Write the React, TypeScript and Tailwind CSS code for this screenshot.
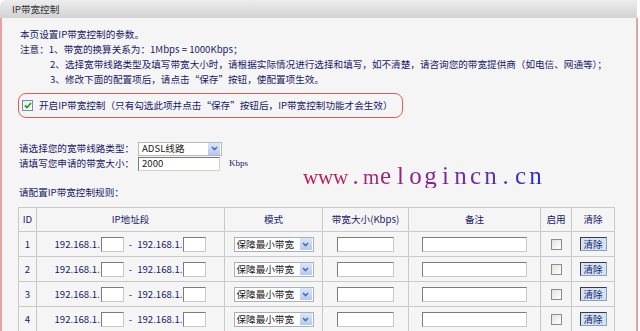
import React from 'react'

const rows = [1, 2, 3, 4]
const cols = 'grid-cols-[18px_188px_98px_86px_132px_31px_43px]'
const mark = 'www.melogincn.cn'.split('')

function Chevron() {
  return (
    <span className="ml-auto mr-[1px] flex h-[12px] w-[12px] items-center justify-center bg-gradient-to-b from-[#dbe6fb] to-[#b4c8f0]">
      <svg width="7" height="5" viewBox="0 0 7 5">
        <path d="M1 1 L3.5 3.6 L6 1" fill="none" stroke="#4d6aa8" strokeWidth="1.5" />
      </svg>
    </span>
  )
}

function TextBox({ w }: { w: string }) {
  return <span className={`block h-[15px] ${w} border border-[#7c7c7c] border-b-[#c8c8c8] border-r-[#c8c8c8] bg-white`} />
}

const cell = 'flex items-center justify-center border-b border-r border-[#c9c9c9]'

export default function App() {
  return (
    <div className="relative h-[331px] w-[640px] overflow-hidden bg-white font-['Noto_Sans_CJK_SC',sans-serif] text-[9.6px] text-[#19196a]">
      {/* title band */}
      <div className="h-[18px] w-[637px] rounded-tl-[6px] bg-gradient-to-b from-[#ededed] to-[#d2d2d2] pl-[12px] leading-[18px] text-[#333]">
        IP带宽控制
      </div>

      <div className="h-[313px] w-[638px] border-x-2 border-[#e3a3a3] bg-[#f5f5f5] pl-[16px] pt-[9px]">
        {/* notes */}
        <div className="pl-[2px] leading-[15px]">
          <div>本页设置IP带宽控制的参数。</div>
          <div>注意：1、带宽的换算关系为：1Mbps = 1000Kbps；</div>
          <div className="pl-[30px]">
            2、选择宽带线路类型及填写带宽大小时，请根据实际情况进行选择和填写，如不清楚，请咨询您的带宽提供商（如电信、网通等）；
          </div>
          <div className="pl-[30px]">3、修改下面的配置项后，请点击“保存”按钮，使配置项生效。</div>
        </div>

        {/* enable box */}
        <div className="mt-[6px] flex h-[25px] w-[385px] items-center gap-[6px] rounded-[8px] border border-[#e25a5a] pl-[3px]">
          <span className="flex h-[11px] w-[11px] items-center justify-center border border-[#6f8fae] bg-gradient-to-br from-[#e6e6e0] to-white">
            <svg width="8" height="7" viewBox="0 0 8 7">
              <path d="M1 3.5 L3 5.5 L7 1" fill="none" stroke="#21a121" strokeWidth="1.8" />
            </svg>
          </span>
          <span>开启IP带宽控制（只有勾选此项并点击“保存”按钮后，IP带宽控制功能才会生效）</span>
        </div>

        {/* line type & bandwidth */}
        <div className="mt-[23px] flex h-[15px] items-center">
          <span className="w-[120px] pl-[1px]">请选择您的宽带线路类型：</span>
          <span className="flex h-[14px] w-[84px] items-center border border-[#b9b9b9] bg-white pl-[3px] text-[#222]">
            ADSL线路
            <Chevron />
          </span>
        </div>
        <div className="flex h-[15px] items-center">
          <span className="w-[120px] pl-[1px]">请填写您申请的带宽大小：</span>
          <span className="flex h-[14px] w-[82px] items-center border border-[#7a7a7a] border-b-[#d4d0c8] border-r-[#d4d0c8] bg-white pl-[3px] text-[#222]">
            2000
          </span>
          <span className="ml-[9px] font-['Liberation_Serif',serif] text-[9px]">Kbps</span>
        </div>

        <div className="mt-[14px] h-[15px] pl-[1px] leading-[15px]">请配置IP带宽控制规则：</div>

        {/* rules table */}
        <div className="mt-[7px] w-[597px] border-l border-t border-[#c9c9c9]">
          <div className={`grid h-[24px] ${cols}`}>
            {['ID', 'IP地址段', '模式', '带宽大小(Kbps)', '备注', '启用', '清除'].map(h => (
              <div key={h} className={cell}>
                {h}
              </div>
            ))}
          </div>
          {rows.map(n => (
            <div key={n} className={`grid h-[25px] ${cols}`}>
              <div className={cell}>{n}</div>
              <div className={cell}>
                <span>192.168.1.</span>
                <span className="ml-[1px]"><TextBox w="w-[23px]" /></span>
                <span className="mx-[5px]">-</span>
                <span>192.168.1.</span>
                <span className="ml-[1px]"><TextBox w="w-[23px]" /></span>
              </div>
              <div className={cell}>
                <span className="flex h-[15px] w-[80px] items-center border border-[#a9b0b8] bg-white pl-[2px] text-[#222]">
                  保障最小带宽
                  <Chevron />
                </span>
              </div>
              <div className={cell}>
                <TextBox w="w-[57px]" />
              </div>
              <div className={cell}>
                <TextBox w="w-[105px]" />
              </div>
              <div className={cell}>
                <span className="block h-[11px] w-[11px] border border-[#8c8c8c] bg-gradient-to-br from-[#e2e2dc] to-white" />
              </div>
              <div className={cell}>
                <span className="flex h-[14px] w-[27px] items-center justify-center border border-[#3c3c3c] border-b-[#8aa0b8] border-r-[#8aa0b8] bg-[#d3e4f6] text-[#1e1e6e]">
                  清除
                </span>
              </div>
            </div>
          ))}
          {/* next row, only its top edge is in view */}
          <div className={`grid h-[25px] ${cols}`}>
            {[0, 1, 2, 3, 4, 5, 6].map(i => (
              <div key={i} className={cell} />
            ))}
          </div>
        </div>
      </div>

      {/* watermark */}
      <div className="absolute left-[303px] top-[163px] flex items-baseline bg-gradient-to-r from-[#c4124a] via-[#8a2090] to-[#2a2ac8] bg-clip-text font-['Liberation_Serif',serif] text-[25px] leading-none text-transparent">
        {mark.map((c, i) => (
          <span key={i} className={`inline-block w-[15px] text-center ${c === 'w' || c === 'm' ? 'text-[21px]' : ''}`}>
            {c}
          </span>
        ))}
      </div>
    </div>
  )
}
